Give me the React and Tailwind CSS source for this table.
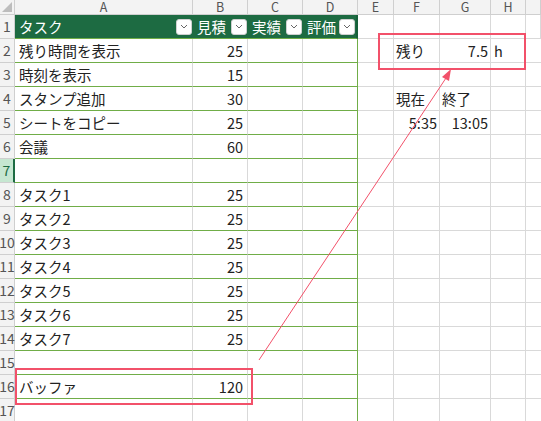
import React from 'react';

const COLS = ['A', 'B', 'C', 'D', 'E', 'F', 'G', 'H', ''];

const rows = [
  { a: '残り時間を表示', b: '25', f: '残り', g: '7.5', h: 'h' },
  { a: '時刻を表示', b: '15' },
  { a: 'スタンプ追加', b: '30', f: '現在', g: '終了', gLeft: true },
  { a: 'シートをコピー', b: '25', f: '5:35', fRight: true, g: '13:05' },
  { a: '会議', b: '60' },
  { a: '', b: '', selected: true },
  { a: 'タスク1', b: '25' },
  { a: 'タスク2', b: '25' },
  { a: 'タスク3', b: '25' },
  { a: 'タスク4', b: '25' },
  { a: 'タスク5', b: '25' },
  { a: 'タスク6', b: '25' },
  { a: 'タスク7', b: '25' },
  { a: '', b: '' },
  { a: 'バッファ', b: '120' },
  { a: '', b: '' },
];

const FilterBtn = () => (
  <span className="ml-auto flex h-[16px] w-[16px] shrink-0 items-center justify-center rounded-[3px] border border-[#d0d0d0] bg-white">
    <svg width="8" height="5" viewBox="0 0 8 5">
      <path d="M1 1 L4 4 L7 1" fill="none" stroke="#666" strokeWidth="1" />
    </svg>
  </span>
);

const HeadCell = ({ label, last }) => (
  <div
    className={
      last
        ? 'flex items-center border-b border-r-2 border-b-[#70ad47] border-r-[#17603a] bg-[#1d6b42] pl-[4px] pr-[1px] text-white'
        : 'flex items-center border-b border-b-[#70ad47] bg-[#1d6b42] pl-[4px] pr-[1px] text-white'
    }
  >
    <span>{label}</span>
    <FilterBtn />
  </div>
);

export default function App() {
  return (
    <div
      className="relative h-[421px] w-[541px] overflow-hidden bg-white text-[14.5px] text-[#222]"
      style={{ fontFamily: '"Noto Sans CJK JP", "Noto Sans", sans-serif' }}
    >
      <div className="grid grid-cols-[15px_178px_55px_55px_55px_36px_46px_51px_35px_15px] grid-rows-[15px_repeat(17,24px)]">
        {/* column letters */}
        <div className="relative border-b border-r border-[#cfcfcf] bg-[#f3f3f3]">
          <svg className="absolute bottom-[2px] right-[2px]" width="10" height="10" viewBox="0 0 10 10">
            <path d="M10 0 L10 10 L0 10 Z" fill="#bdbdbd" />
          </svg>
        </div>
        {COLS.map((c, i) => (
          <div
            key={i}
            className="flex items-center justify-center overflow-hidden border-b border-r border-[#cfcfcf] bg-[#f3f3f3] text-[12.5px] leading-[14px] text-[#555]"
          >
            {c}
          </div>
        ))}

        {/* row 1: table header */}
        <div className="flex items-center justify-center border-b border-r border-[#cfcfcf] bg-[#f3f3f3] text-[14px] text-[#555]">1</div>
        <HeadCell label="タスク" />
        <HeadCell label="見積" />
        <HeadCell label="実績" />
        <HeadCell label="評価" last />
        {[0, 1, 2, 3, 4].map((k) => (
          <div key={k} className="border-b border-r border-[#d9d9d9]" />
        ))}

        {rows.map((r, idx) => {
          const n = idx + 2;
          return (
            <React.Fragment key={n}>
              <div
                className={
                  r.selected
                    ? 'flex items-center justify-center border-b border-r-2 border-b-[#cfcfcf] border-r-[#1d6b42] bg-[#c6e7d1] text-[14px] text-[#1d6b42]'
                    : 'flex items-center justify-center whitespace-nowrap border-b border-r border-[#cfcfcf] bg-[#f3f3f3] text-[14px] text-[#555]'
                }
              >
                {n}
              </div>
              <div className="flex items-center overflow-hidden whitespace-nowrap border-b border-r border-b-[#70ad47] border-r-[#d9d9d9] bg-white pl-[4px]">
                {r.a}
              </div>
              <div className="flex items-center justify-end border-b border-r border-b-[#70ad47] border-r-[#d9d9d9] pr-[4px]">
                {r.b}
              </div>
              <div className="border-b border-r border-b-[#70ad47] border-r-[#d9d9d9]" />
              <div className="border-b border-r border-b-[#70ad47] border-r-[#70ad47]" />
              <div className="border-b border-r border-[#d9d9d9]" />
              <div
                className={
                  r.fRight
                    ? 'flex items-center justify-end whitespace-nowrap border-b border-r border-[#d9d9d9] pr-[2px]'
                    : 'flex items-center whitespace-nowrap border-b border-r border-[#d9d9d9] pl-[2px]'
                }
              >
                {r.f}
              </div>
              <div
                className={
                  r.gLeft
                    ? 'flex items-center whitespace-nowrap border-b border-r border-[#d9d9d9] pl-[2px]'
                    : 'flex items-center justify-end whitespace-nowrap border-b border-r border-[#d9d9d9] pr-[2px]'
                }
              >
                {r.g}
              </div>
              <div className="flex items-center border-b border-r border-[#d9d9d9] pl-[3px]">{r.h}</div>
              <div className="border-b border-[#d9d9d9]" />
            </React.Fragment>
          );
        })}
      </div>

      {/* callout boxes */}
      <div className="pointer-events-none absolute left-[378px] top-[33px] h-[37px] w-[148px] border-2 border-[#f2516a]" />
      <div className="pointer-events-none absolute left-[15px] top-[368px] h-[37px] w-[238px] border-2 border-[#f2516a]" />

      {/* arrow */}
      <svg className="pointer-events-none absolute left-0 top-0" width="541" height="421">
        <line x1="259" y1="360" x2="446" y2="78" stroke="#f2516a" strokeWidth="1" />
        <path d="M451 69 L442 77 L449 81 Z" fill="#f2516a" />
      </svg>
    </div>
  );
}
